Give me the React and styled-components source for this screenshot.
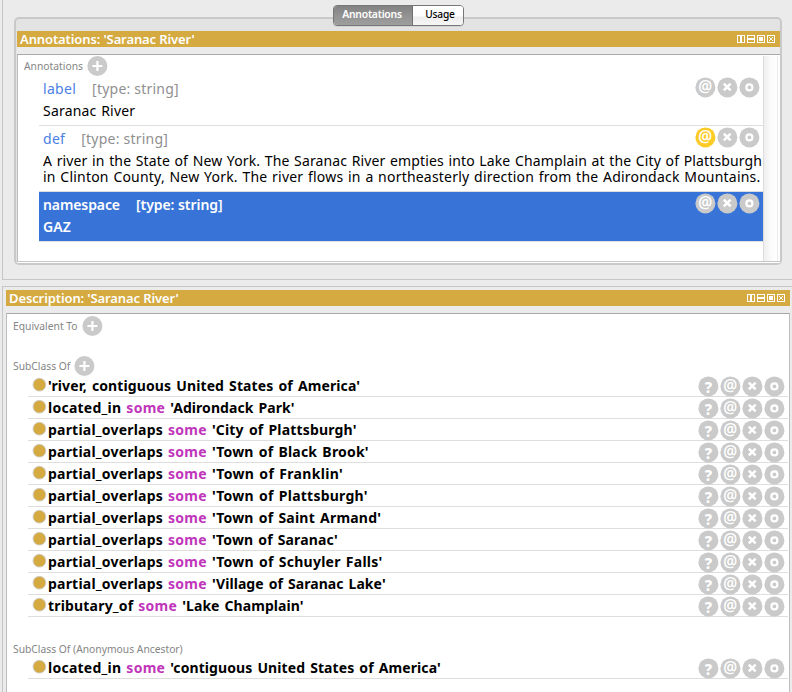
import React from 'react';
import styled, { createGlobalStyle } from 'styled-components';

const Global = createGlobalStyle`
  * { box-sizing: border-box; }
  html, body { margin: 0; padding: 0; overflow: hidden; }
  body { background: #ebebeb; font-family: "Noto Sans", "Open Sans", sans-serif; color: #000; }
`;

const Page = styled.div`
  width: 792px;
  height: 692px;
  overflow: hidden;
  padding-left: 2px;
  display: flex;
  flex-direction: column;
  gap: 6px;
`;

const TopPane = styled.section`
  flex: none;
  height: 280px;
  border-left: 1px solid #c6c6c6;
  border-bottom: 1px solid #c6c6c6;
  padding: 5px 10px 0 11px;
`;

const Tabs = styled.div`
  position: relative;
  display: flex;
  width: 131px;
  height: 21px;
  margin: 0 0 -9px 319px;
  border: 1px solid #777;
  border-radius: 4px;
  background: #fff;
  overflow: hidden;
  box-shadow: 0 1px 0 #d4d4d4;
`;

const Tab = styled.div`
  width: ${(p) => (p.$active ? 79 : 50)}px;
  padding-left: ${(p) => (p.$active ? 0 : 4)}px;
  padding-right: ${(p) => (p.$active ? 2 : 0)}px;
  line-height: 17px;
  text-align: center;
  font-size: ${(p) => (p.$active ? 10.4 : 10.2)}px;
  font-weight: ${(p) => (p.$active ? 600 : 500)};
  letter-spacing: ${(p) => (p.$active ? -0.25 : -0.2)}px;
  color: ${(p) => (p.$active ? '#fff' : '#000')};
  border-right: ${(p) => (p.$active ? '1px solid #707070' : '0')};
  background: ${(p) =>
    p.$active
      ? 'linear-gradient(#828282, #929292 50%, #9e9e9e)'
      : 'linear-gradient(#fff, #fdfdfd 50%, #eee 60%, #f6f6f6)'};
`;

const Group = styled.div`
  height: 248px;
  border: 2px solid #c9c9c9;
  border-radius: 5px;
  background: #e3e3e3;
  padding: 12px 0 0 1px;
`;

const TitleBar = styled.header`
  height: 16px;
  flex: none;
  background: #d4aa41;
  color: #fff;
  display: flex;
  align-items: center;
  justify-content: space-between;
  padding: 0 4px 0 3px;
  font-size: 13px;
  line-height: 16px;
  font-weight: 600;
  letter-spacing: -0.11px;
`;

const WindowIcons = styled.svg`
  display: block;
  width: 39px;
  height: 8px;
`;

const GroupBody = styled.div`
  height: 216px;
  background: #fff;
  border-top: 7px solid #ebebeb;
`;

const AnnotationPanel = styled.div`
  display: flex;
  height: 208px;
  background: #fff;
  border-top: 1px solid #a9a9a9;
  border-left: 1px solid #bdbdbd;
  border-bottom: 1px solid #c6c6c6;
`;

const AnnotationList = styled.div`
  width: 745px;
`;

const ScrollTrack = styled.div`
  width: 15px;
  margin-top: 1px;
  border-left: 1px solid #dcdcdc;
  border-right: 1px solid #ececec;
  background: linear-gradient(90deg, #efefef, #fafafa 50%, #fff);
`;

const Heading = styled.div`
  display: flex;
  align-items: center;
  gap: 4px;
  height: ${(p) => p.$height}px;
  margin-top: ${(p) => p.$top || 0}px;
  padding-left: 6px;
  color: #858585;
  font-size: 10.3px;
  line-height: 20px;
  white-space: nowrap;
`;

const AddIcon = styled.svg`
  display: block;
  flex: none;
  width: 21px;
  height: 20px;
`;

const Annotation = styled.article`
  margin-left: 21px;
  padding: 2px 0 6px 4px;
  border-bottom: 1px solid #dedede;
  background: ${(p) => (p.$selected ? '#3874d8' : '#fff')};
  color: ${(p) => (p.$selected ? '#fff' : '#000')};
  font-weight: ${(p) => (p.$selected ? 600 : 400)};
  font-size: 14px;
  white-space: nowrap;
`;

const NameLine = styled.div`
  display: flex;
  height: 22px;
  line-height: 22px;
`;

const Property = styled.span`
  color: ${(p) => (p.$selected ? '#fff' : '#4c7fe6')};
  letter-spacing: ${(p) => (p.$selected ? -0.1 : 0.3)}px;
  margin-right: 16px;
`;

const Datatype = styled.span`
  color: ${(p) => (p.$selected ? '#fff' : '#8f8f8f')};
  letter-spacing: ${(p) => (p.$selected ? -0.05 : 0.22)}px;
`;

const Value = styled.div`
  margin-top: 3px;
  line-height: 16px;
`;

const ValueLine = styled.div`
  letter-spacing: ${(p) => p.$spacing}px;
  word-spacing: 0.8px;
`;

const Actions = styled.div`
  display: flex;
  margin: ${(p) => (p.$raised ? '-2px 3px 0 auto' : '0 3px 0 auto')};
`;

const Round = styled.svg`
  display: block;
  width: 22px;
  height: 23px;
`;

const IconText = styled.text`
  font-family: "Noto Sans", sans-serif;
  font-size: ${(p) => p.$size}px;
  font-weight: ${(p) => p.$weight};
  text-anchor: middle;
  fill: #fff;
`;

const BottomPane = styled.section`
  flex: 1;
  display: flex;
  flex-direction: column;
  border-left: 1px solid #c6c6c6;
  border-top: 1px solid #c6c6c6;
  padding: 3px 2px 0 3px;
`;

const DescriptionPanel = styled.div`
  flex: 1;
  margin-top: 7px;
  background: #fff;
  border-top: 1px solid #a9a9a9;
  border-left: 1px solid #bdbdbd;
  border-right: 1px solid #bdbdbd;
`;

const ClassRow = styled.div`
  display: flex;
  height: 22px;
  margin: 0 1px 0 21px;
  padding-left: 4px;
  border-bottom: 1px solid #dedede;
`;

const Dot = styled.svg`
  display: block;
  flex: none;
  width: 16px;
  height: 20px;
`;

const Expression = styled.div`
  display: flex;
  gap: 5px;
  font-size: 14px;
  font-weight: 700;
  line-height: 22px;
  white-space: nowrap;
`;

const Term = styled.span`
  letter-spacing: ${(p) => p.$spacing}px;
  word-spacing: 1.3px;
`;

const Keyword = styled.span`
  color: #bf36bb;
  letter-spacing: 0.25px;
  width: 39px;
`;

function Icon({ kind, highlighted }) {
  return (
    <Round viewBox="0 0 22 23">
      <circle cx="11.4" cy="11.4" r="10" fill={highlighted ? '#ffcb26' : '#cacaca'} />
      {kind === 'at' && <IconText x="11.3" y="16.2" $size={15.5} $weight={600}>@</IconText>}
      {kind === 'help' && <IconText x="11.4" y="17.6" $size={15} $weight={800}>?</IconText>}
      {kind === 'remove' && (
        <path d="M7.8 7.6l6.8 6.8M14.6 7.6l-6.8 6.8" stroke="#fff" strokeWidth="2.5" />
      )}
      {kind === 'edit' && (
        <circle cx="11.4" cy="11.4" r="3" fill="none" stroke="#fff" strokeWidth="2.2" />
      )}
    </Round>
  );
}

function Add() {
  return (
    <AddIcon viewBox="0 0 21 20">
      <circle cx="10.4" cy="10" r="10" fill="#cacaca" />
      <path d="M10.4 5v10M5.400 10h10" stroke="#fff" strokeWidth="2.2" />
    </AddIcon>
  );
}

function WindowControls() {
  return (
    <WindowIcons viewBox="0 0 39 8" shapeRendering="crispEdges">
      <g fill="none" stroke="#fff">
        <path d="M.5.5h7v7h-7zM10.5.5h7v7h-7zM20.5.5h7v7h-7zM30.5.5h7v7h-7z" />
      </g>
      <g fill="#fff">
        <path d="M3 1h2v6H3zM11 3h6v2h-6zM22 2h4v4h-4z" />
        <path d="M32 2h1v1h-1zM35 2h1v1h-1zM33 3h2v2h-2zM32 5h1v1h-1zM35 5h1v1h-1z" />
      </g>
    </WindowIcons>
  );
}

const annotations = [
  { name: 'label', lines: [['Saranac River', 0.2]] },
  {
    name: 'def',
    highlighted: true,
    lines: [
      ['A river in the State of New York. The Saranac River empties into Lake Champlain at the City of Plattsburgh', 0.132],
      ['in Clinton County, New York. The river flows in a northeasterly direction from the Adirondack Mountains.', 0.212],
    ],
  },
  { name: 'namespace', selected: true, lines: [['GAZ', 0.1]] },
];

const overlaps = (term, spacing) => ({ property: 'partial_overlaps', propertySpacing: 0.21, term, spacing });

const superclasses = [
  { term: "'river, contiguous United States of America'", spacing: 0.11 },
  { property: 'located_in', propertySpacing: 0.25, term: "'Adirondack Park'", spacing: 0.06 },
  overlaps("'City of Plattsburgh'", 0.17),
  overlaps("'Town of Black Brook'", 0.2),
  overlaps("'Town of Franklin'", 0.3),
  overlaps("'Town of Plattsburgh'", 0.24),
  overlaps("'Town of Saint Armand'", 0.2),
  overlaps("'Town of Saranac'", 0.12),
  overlaps("'Town of Schuyler Falls'", 0.24),
  overlaps("'Village of Saranac Lake'", 0.06),
  { property: 'tributary_of', propertySpacing: 0.18, term: "'Lake Champlain'", spacing: 0.06 },
];

const ancestors = [
  { property: 'located_in', propertySpacing: 0.25, term: "'contiguous United States of America'", spacing: 0.09 },
];

function AnnotationItem({ name, lines, selected, highlighted }) {
  return (
    <Annotation $selected={selected}>
      <NameLine>
        <Property $selected={selected}>{name}</Property>
        <Datatype $selected={selected}>[type: string]</Datatype>
        <Actions $raised>
          <Icon kind="at" highlighted={highlighted} />
          <Icon kind="remove" />
          <Icon kind="edit" />
        </Actions>
      </NameLine>
      <Value>
        {lines.map(([text, spacing]) => (
          <ValueLine key={text} $spacing={spacing}>{text}</ValueLine>
        ))}
      </Value>
    </Annotation>
  );
}

function ClassItem({ property, propertySpacing, term, spacing }) {
  return (
    <ClassRow>
      <Dot viewBox="0 0 16 20">
        <circle cx="7.4" cy="9.7" r="6.4" fill="#d4aa41" stroke="#cdcdcd" strokeWidth="0.9" />
      </Dot>
      <Expression>
        {property && <Term $spacing={propertySpacing}>{property}</Term>}
        {property && <Keyword>some</Keyword>}
        <Term $spacing={spacing}>{term}</Term>
      </Expression>
      <Actions>
        <Icon kind="help" />
        <Icon kind="at" />
        <Icon kind="remove" />
        <Icon kind="edit" />
      </Actions>
    </ClassRow>
  );
}

export default function App() {
  return (
    <>
      <Global />
      <Page>
        <TopPane>
          <Tabs>
            <Tab $active>Annotations</Tab>
            <Tab>Usage</Tab>
          </Tabs>
          <Group>
            <TitleBar>
              Annotations: 'Saranac River'
              <WindowControls />
            </TitleBar>
            <GroupBody>
              <AnnotationPanel>
                <AnnotationList>
                  <Heading $height={20} $top={1}>Annotations<Add /></Heading>
                  {annotations.map((a) => <AnnotationItem key={a.name} {...a} />)}
                </AnnotationList>
                <ScrollTrack />
              </AnnotationPanel>
            </GroupBody>
          </Group>
        </TopPane>
        <BottomPane>
          <TitleBar>
            Description: 'Saranac River'
            <WindowControls />
          </TitleBar>
          <DescriptionPanel>
            <Heading $height={23}>Equivalent To<Add /></Heading>
            <Heading $height={19} $top={19}>SubClass Of<Add /></Heading>
            {superclasses.map((c) => <ClassItem key={c.term} {...c} />)}
            <Heading $height={17} $top={23}>SubClass Of (Anonymous Ancestor)</Heading>
            {ancestors.map((c) => <ClassItem key={c.term} {...c} />)}
          </DescriptionPanel>
        </BottomPane>
      </Page>
    </>
  );
}
